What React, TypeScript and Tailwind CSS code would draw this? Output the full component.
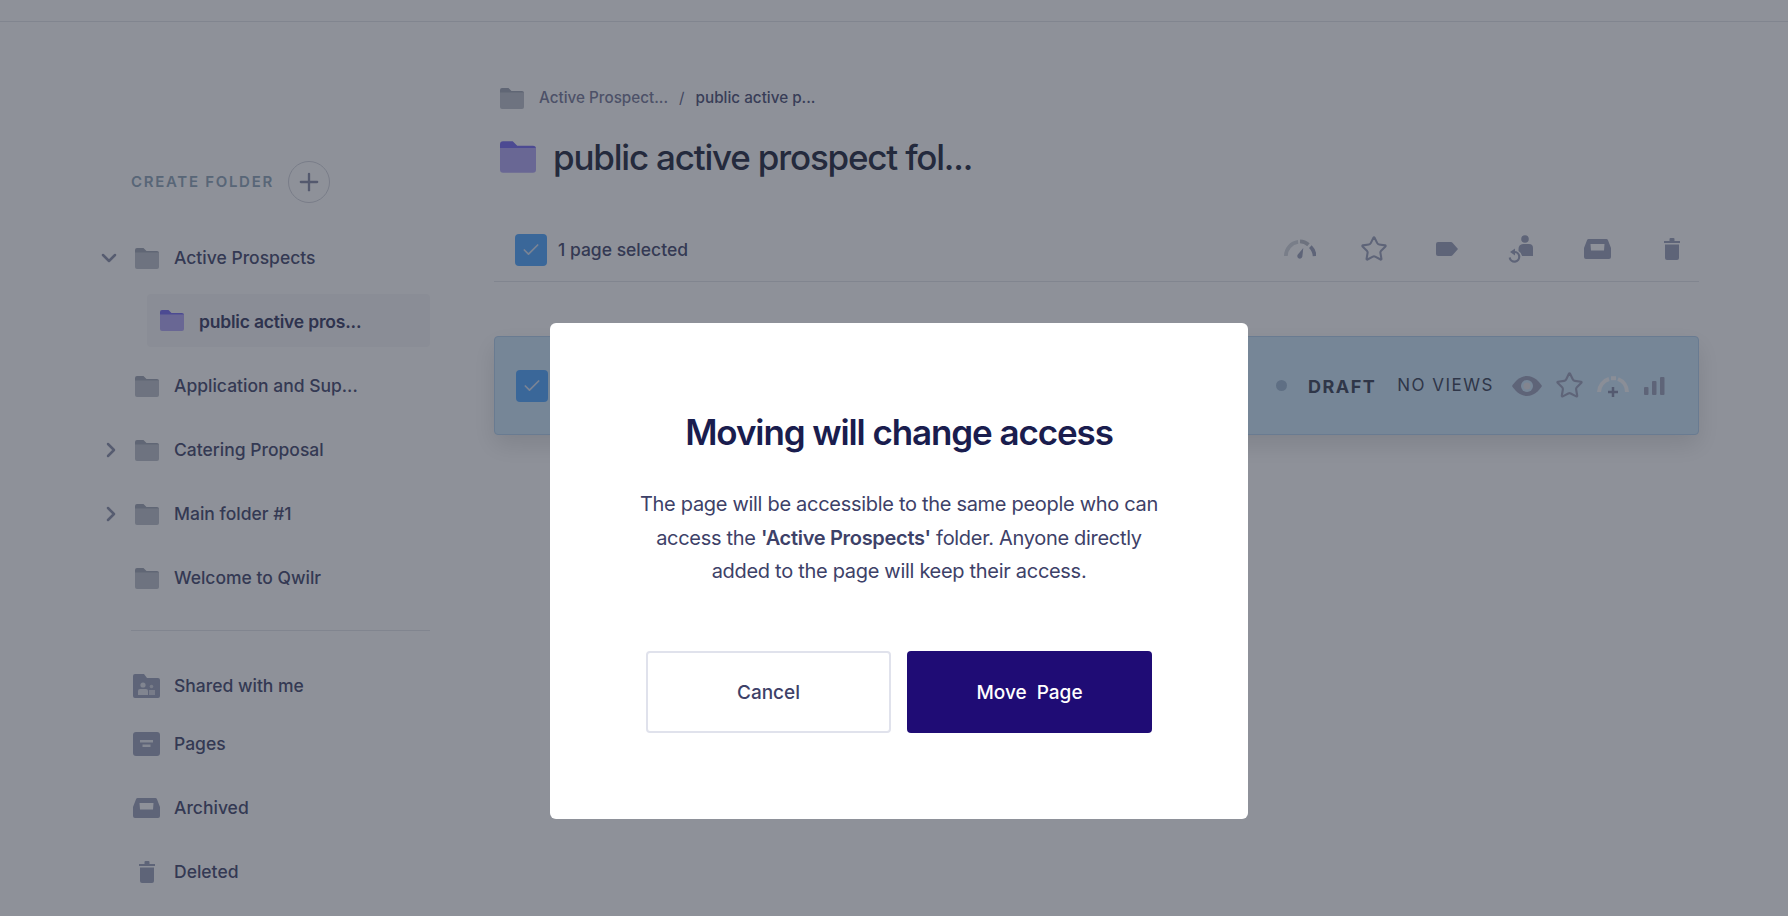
import React from 'react';
import { ChevronDown, ChevronRight, Plus, Check, Star } from 'lucide-react';

const FONT = 'font-["Inter","Noto_Sans",sans-serif]';

function Folder({ className, tab, body }: { className: string; tab: string; body: string }) {
  return (
    <svg viewBox="0 0 24 21" className={className}>
      <path d="M0 2a2 2 0 0 1 2-2h6.5l3 3H22a2 2 0 0 1 2 2v2H0z" fill={tab} />
      <path d="M0 4.5h24V19a2 2 0 0 1-2 2H2a2 2 0 0 1-2-2z" fill={body} />
    </svg>
  );
}

function GrayFolder() {
  return <Folder className="w-6 h-[21px] shrink-0" tab="#a3a8b6" body="#bfc3cc" />;
}

function PurpleFolder({ className }: { className: string }) {
  return <Folder className={className} tab="#7b71f0" body="#b5abf5" />;
}

function FolderRow({ label, chevron }: { label: string; chevron?: 'down' | 'right' }) {
  return (
    <div className="flex items-center h-16">
      <div className="w-[35px] shrink-0">
        {chevron === 'down' && <ChevronDown className="w-6 h-6 -ml-[3px] text-[#8f94ad]" strokeWidth={2.5} />}
        {chevron === 'right' && <ChevronRight className="w-6 h-6 -ml-[1px] text-[#8f94ad]" strokeWidth={2.5} />}
      </div>
      <GrayFolder />
      <span className="ml-[15px] text-[17.5px] font-medium text-[#4b4f73]">{label}</span>
    </div>
  );
}

function NavRow({ label, icon, h }: { label: string; icon: React.ReactNode; h: string }) {
  return (
    <div className={`flex items-center pl-[33px] ${h}`}>
      <div className="w-[27px] flex justify-center shrink-0">{icon}</div>
      <span className="ml-[14px] text-[17.5px] font-medium text-[#4b4f73]">{label}</span>
    </div>
  );
}

const iconFill = '#9fa5bd';

function SharedIcon() {
  return (
    <svg viewBox="0 0 27 24" className="w-[27px] h-6">
      <path d="M0 2a2 2 0 0 1 2-2h9l3 4h11a2 2 0 0 1 2 2v16a2 2 0 0 1-2 2H2a2 2 0 0 1-2-2z" fill={iconFill} />
      <circle cx="10" cy="11" r="2.6" fill="#e4e6ec" />
      <path d="M5 21v-4a2 2 0 0 1 2-2h6a2 2 0 0 1 2 2v4z" fill="#e4e6ec" />
      <circle cx="18.5" cy="12.5" r="1.8" fill="#d2d5de" />
      <rect x="16" y="16" width="6" height="5" fill="#d2d5de" />
    </svg>
  );
}

function PagesIcon() {
  return (
    <svg viewBox="0 0 27 24" className="w-[27px] h-6">
      <rect width="27" height="24" rx="3" fill={iconFill} />
      <rect x="7" y="8" width="13" height="2.5" fill="#eceef2" />
      <rect x="9.5" y="12.5" width="8" height="2.5" fill="#eceef2" />
    </svg>
  );
}

function ArchiveIcon({ className }: { className: string }) {
  return (
    <svg viewBox="0 0 27 20" className={className}>
      <path
        fillRule="evenodd"
        d="M5 0h17a2 2 0 0 1 2 1.200L27 9v9a2 2 0 0 1-2 2H2a2 2 0 0 1-2-2V9l3-7.800A2 2 0 0 1 5 0zM6.500 5l.5 6.500h13l.5-6.500z"
        fill={iconFill}
      />
    </svg>
  );
}

function TrashIcon({ className }: { className: string }) {
  return (
    <svg viewBox="0 0 16 22" className={className}>
      <path d="M0 3h5.5V1a1 1 0 0 1 1-1h3a1 1 0 0 1 1 1v2H16v2H0z" fill={iconFill} />
      <path d="M1 6.5h14V20a2 2 0 0 1-2 2H3a2 2 0 0 1-2-2z" fill={iconFill} />
    </svg>
  );
}

function GaugeIcon() {
  return (
    <svg viewBox="0 0 34 21" className="w-[32px] h-5" fill="none">
      <path d="M2 18A15 15 0 0 1 15 3" stroke="#d5d8de" strokeWidth="4" />
      <path d="M17 2.500A15 15 0 0 1 26 6" stroke="#bcc0c9" strokeWidth="4" />
      <path d="M28 8a15 15 0 0 1 4.500 10" stroke={iconFill} strokeWidth="4" />
      <path d="M20.500 9.500l-1 9a2.700 2.700 0 1 1-5-1.800z" fill={iconFill} />
    </svg>
  );
}

function GaugePlusIcon() {
  return (
    <svg viewBox="0 0 32 22" className="w-8 h-[22px]" fill="none">
      <path d="M2 17A14 14 0 0 1 12 4" stroke="#f6f8fb" strokeWidth="4" />
      <path d="M14 3.200h5" stroke="#f6f8fb" strokeWidth="4" />
      <path d="M21 4a14 14 0 0 1 9 13" stroke="#f6f8fb" strokeWidth="4" />
      <path d="M16 12v10M11 17h10" stroke="#8a90ad" strokeWidth="2.500" />
    </svg>
  );
}

function TagIcon() {
  return (
    <svg viewBox="0 0 22 14" className="w-[22px] h-[14px]">
      <path d="M2 0h13a2 2 0 0 1 1.500.7L22 7l-5.500 6.300a2 2 0 0 1-1.500.7H2a2 2 0 0 1-2-2V2a2 2 0 0 1 2-2z" fill={iconFill} />
    </svg>
  );
}

function OwnerIcon() {
  return (
    <svg viewBox="0 0 26 28" className="w-[26px] h-7" fill="none">
      <circle cx="17" cy="4" r="3.800" fill={iconFill} />
      <path d="M10.500 14a5 5 0 0 1 4.500-5h6a4 4 0 0 1 4 4v8H14a7 7 0 0 0-3.500-5z" fill={iconFill} />
      <path d="M6 17a4.800 4.800 0 1 1-4.300 5.500" stroke={iconFill} strokeWidth="2.200" />
      <path d="M7 13.500v7l-5-3.500z" fill={iconFill} />
    </svg>
  );
}

function EyeIcon() {
  return (
    <svg viewBox="0 0 30 20" className="w-[30px] h-5">
      <path d="M15 0c7 0 12 5.500 15 10-3 4.500-8 10-15 10S3 14.500 0 10C3 5.500 8 0 15 0z" fill={iconFill} />
      <circle cx="15" cy="10" r="6" fill="#cfe8fb" />
      <circle cx="15" cy="10" r="3.500" fill="#e8e6ea" />
    </svg>
  );
}

function BarsIcon() {
  return (
    <svg viewBox="0 0 21 18" className="w-[21px] h-[18px]">
      <rect x="0" y="10" width="4.500" height="8" rx="1" fill={iconFill} />
      <rect x="8" y="4" width="4.500" height="14" rx="1" fill={iconFill} />
      <rect x="16" y="0" width="4.500" height="18" rx="1" fill={iconFill} />
    </svg>
  );
}

function Checkbox() {
  return (
    <div className="w-8 h-8 rounded bg-[#57aaff] flex items-center justify-center shrink-0">
      <Check className="w-5 h-5 text-[#d6e4f5]" strokeWidth={2} />
    </div>
  );
}

function Sidebar() {
  return (
    <aside className="w-[494px] shrink-0 pl-[100px]">
      <div className="flex items-center h-[42px] mt-[139px] pl-[31px]">
        <span className="text-[15px] font-semibold tracking-[1.7px] text-[#93a8bb]">CREATE FOLDER</span>
        <div className="ml-[14px] w-[42px] h-[42px] rounded-full border border-[#d4d6dd] flex items-center justify-center">
          <Plus className="w-7 h-7 text-[#8a8fa8]" strokeWidth={2} />
        </div>
      </div>
      <div className="mt-[23px]">
        <FolderRow label="Active Prospects" chevron="down" />
        <div className="ml-[47px] w-[283px] h-[53px] mt-[4px] rounded bg-[#f7f7f8] flex items-center pl-[13px]">
          <PurpleFolder className="w-6 h-[21px] shrink-0" />
          <span className="ml-[15px] pt-[3px] text-[17.5px] font-semibold tracking-[-0.2px] text-[#3e4268]">public active pros...</span>
        </div>
        <div className="mt-[7px]">
          <FolderRow label="Application and Sup..." />
          <FolderRow label="Catering Proposal" chevron="right" />
          <FolderRow label="Main folder #1" chevron="right" />
          <FolderRow label="Welcome to Qwilr" />
        </div>
      </div>
      <div className="ml-[31px] w-[299px] mt-[20px] border-t border-[#e4e6ea]" />
      <div className="mt-[26px]">
        <NavRow label="Shared with me" icon={<SharedIcon />} h="h-[58px]" />
        <NavRow label="Pages" icon={<PagesIcon />} h="h-[58px]" />
        <NavRow label="Archived" icon={<ArchiveIcon className="w-[27px] h-5" />} h="h-[70px]" />
        <NavRow label="Deleted" icon={<TrashIcon className="w-4 h-[22px]" />} h="h-[58px]" />
      </div>
    </aside>
  );
}

function Toolbar() {
  return (
    <div className="mt-[40px] h-[63px] border-b border-[#e4e6ea] flex items-center pl-[21px] pr-[19px]">
      <Checkbox />
      <span className="ml-[11px] text-[17.5px] font-medium text-[#4b4f73]">1 page selected</span>
      <div className="ml-auto flex items-center pb-[2px]">
        <GaugeIcon />
        <Star className="ml-[44px] w-[28px] h-[28px] text-[#9fa5bd]" strokeWidth={1.8} />
        <div className="ml-[48px]"><TagIcon /></div>
        <div className="ml-[50px]"><OwnerIcon /></div>
        <div className="ml-[50px]"><ArchiveIcon className="w-[27px] h-5" /></div>
        <div className="ml-[53px]"><TrashIcon className="w-4 h-[22px]" /></div>
      </div>
    </div>
  );
}

function PageCard() {
  return (
    <div className="mt-[54px] h-[99px] rounded border border-[#b4d2ee] bg-[#cfe8fb] shadow-[0_10px_25px_rgba(0,0,0,0.12)] flex items-center pl-[21px] pr-[33px]">
      <Checkbox />
      <div className="ml-auto flex items-center">
        <div className="w-[11px] h-[11px] rounded-full bg-[#a0bbd4]" />
        <span className="ml-[21px] pt-[1px] text-[18px] font-bold tracking-[1.5px] text-[#41495d]">DRAFT</span>
        <span className="ml-[21px] pt-[1px] text-[17px] tracking-[1.5px] text-[#41495d]">NO VIEWS</span>
        <div className="ml-[18px]"><EyeIcon /></div>
        <Star className="ml-[13px] w-[29px] h-[29px] text-[#9fa5bd]" strokeWidth={1.8} />
        <div className="ml-[13px]"><GaugePlusIcon /></div>
        <div className="ml-[15px]"><BarsIcon /></div>
      </div>
    </div>
  );
}

function Main() {
  return (
    <main className="w-[1205px] shrink-0">
      <div className="flex items-center h-[24px] mt-[64px] pl-[6px] text-[15.25px]">
        <GrayFolder />
        <span className="ml-[15px] text-[#7c7f9c] font-medium">Active Prospect...</span>
        <span className="ml-[11px] text-[#666a8c]">/</span>
        <span className="ml-[11px] text-[#53577b] font-medium">public active p...</span>
      </div>
      <div className="flex items-center mt-[25px] pl-[6px] h-[44px]">
        <PurpleFolder className="w-9 h-8 shrink-0" />
        <h1 className="ml-[17px] text-[35px] font-medium tracking-[-1.2px] text-[#2a3146] leading-none">public active prospect fol...</h1>
      </div>
      <Toolbar />
      <PageCard />
    </main>
  );
}

function MoveDialog() {
  return (
    <div className="absolute inset-0 bg-[#1d2333]/50 pl-[550px] pt-[323px]">
      <div className="w-[698px] h-[496px] bg-white rounded-md flex flex-col items-center pt-[85px]">
        <h2 className="text-[35px] leading-[48px] font-semibold tracking-[-1.1px] text-[#1a1d4e]">Moving will change access</h2>
        <p className="mt-[32px] w-[530px] text-center text-[20px] leading-[33.5px] tracking-[-0.3px] text-[#3d4168]">
          The page will be accessible to the same people who can access the <span className="font-semibold">'Active Prospects'</span> folder. Anyone directly added to the page will keep their access.
        </p>
        <div className="mt-[62px] flex gap-4">
          <button className="w-[245px] h-[82px] pt-[3px] rounded border-2 border-[#e0e2ec] bg-white text-[19px] font-medium text-[#3d4168]">Cancel</button>
          <button className="w-[245px] h-[82px] pt-[3px] rounded bg-[#1f0c75] text-[19px] font-medium text-white whitespace-pre">Move  Page</button>
        </div>
      </div>
    </div>
  );
}

export default function App() {
  return (
    <div className={`relative w-[1788px] h-[916px] overflow-hidden bg-white ${FONT}`}>
      <div className="h-[22px] border-b border-[#e4e6ea]" />
      <div className="flex">
        <Sidebar />
        <Main />
      </div>
      <MoveDialog />
    </div>
  );
}
